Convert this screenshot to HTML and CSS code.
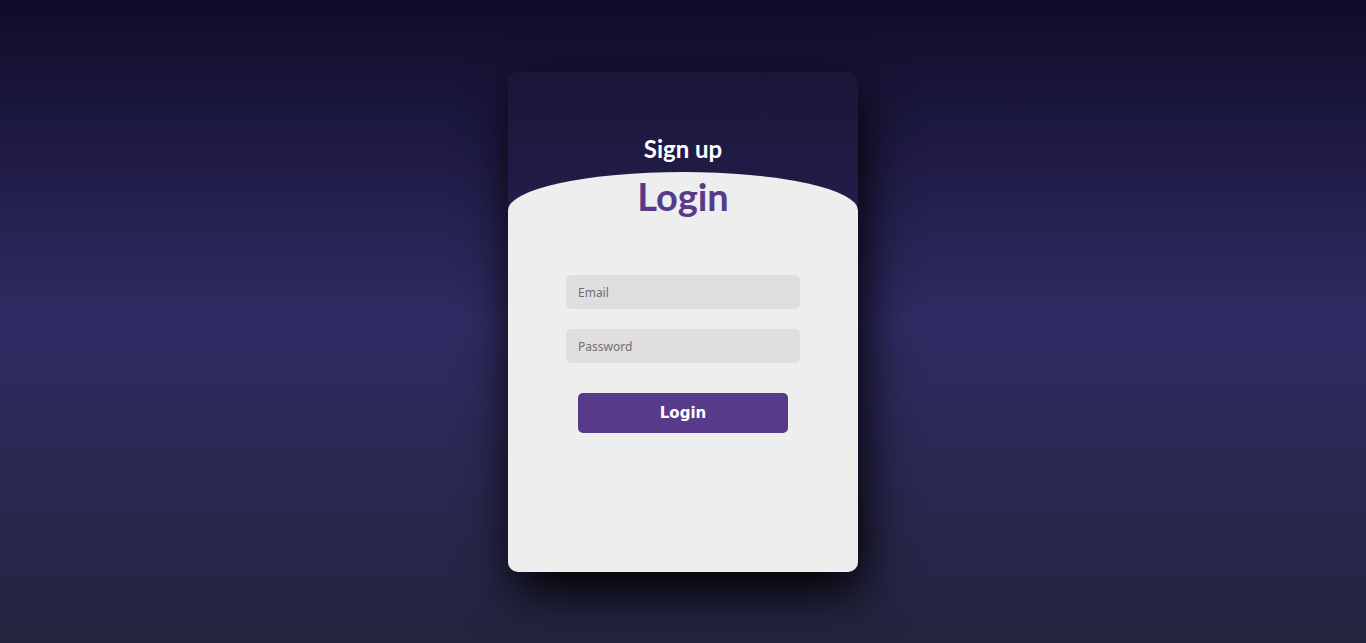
FILE: index.html
```html
<!DOCTYPE html>
<html lang="en">
<head>
    <meta charset="UTF-8">
    <meta name="viewport" content="width=device-width, initial-scale=1.0">
    <title>Login / Sign up</title>
    <link rel="stylesheet" href="styles.css">
</head>
<body>
    <div class="main">
        <div class="signup">
            <label class="signup-label">Sign up</label>
        </div>

        <div class="login">
            <label class="login-label">Login</label>
            <form class="login-form">
                <input type="email" class="field" placeholder="Email">
                <input type="password" class="field" placeholder="Password">
                <button type="button" class="login-button">Login</button>
            </form>
        </div>
    </div>
</body>
</html>
```

FILE: styles.css
```css
* {
    margin: 0;
    padding: 0;
    box-sizing: border-box;
}

body {
    min-height: 100vh;
    display: flex;
    justify-content: center;
    align-items: center;
    font-family: "Lato", "DejaVu Sans", sans-serif;
    background: linear-gradient(to bottom, #0f0c29, #302b63, #24243e);
}

.main {
    width: 350px;
    height: 500px;
    display: flex;
    flex-direction: column;
    overflow: hidden;
    border-radius: 10px;
    background: linear-gradient(to bottom, #1a1637 0%, #231e4c 30%, #2d2762 100%);
    box-shadow: 5px 20px 50px #000;
}

.signup {
    height: 100px;
    flex-shrink: 0;
    padding-top: 62px;
    display: flex;
    justify-content: center;
}

.signup-label {
    color: #fff;
    font-size: 24px;
    line-height: 29px;
    font-weight: 700;
}

.login {
    height: 460px;
    flex-shrink: 0;
    background: #eee;
    border-radius: 60% / 10%;
    display: flex;
    flex-direction: column;
    align-items: center;
}

.login-label {
    color: #573b8a;
    font-size: 38px;
    line-height: 48px;
    font-weight: 700;
}

.login-form {
    margin-top: 55px;
    display: flex;
    flex-direction: column;
    align-items: center;
    gap: 20px;
}

.field {
    width: 234px;
    height: 34px;
    padding: 1px 12px 0;
    border: none;
    outline: none;
    border-radius: 5px;
    background: #e0dede;
    font-family: "Noto Sans", "DejaVu Sans", sans-serif;
    font-size: 12px;
    color: #333;
}

.field::placeholder {
    color: #6f6f6f;
}

.login-button {
    width: 210px;
    height: 40px;
    margin-top: 10px;
    border: none;
    border-radius: 5px;
    background: #573b8a;
    color: #fff;
    font-family: "DejaVu Sans", sans-serif;
    font-size: 15px;
    font-weight: 700;
    cursor: pointer;
}
```
